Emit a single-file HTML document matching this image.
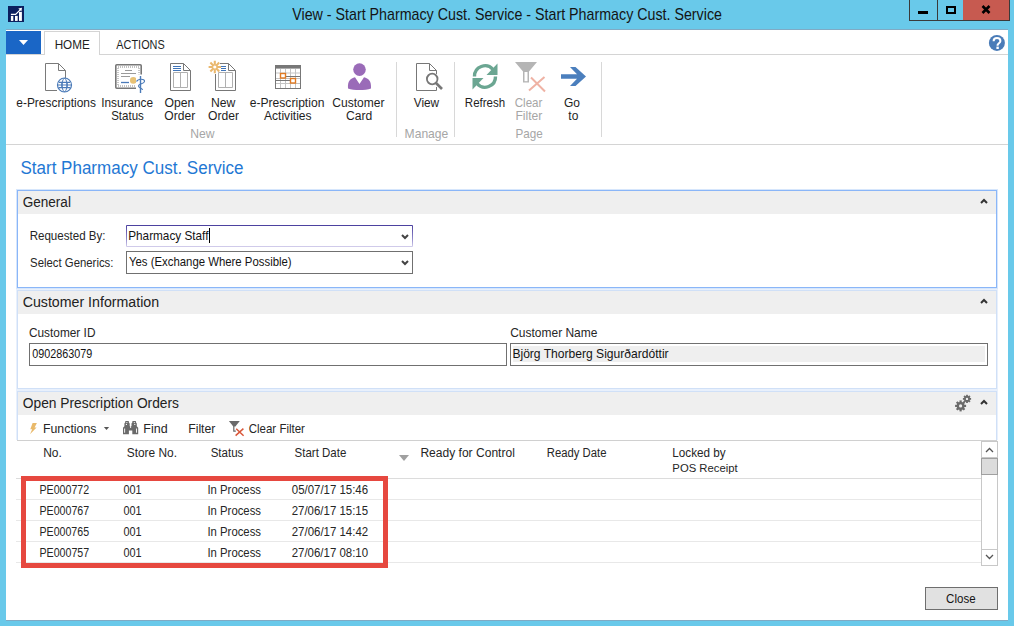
<!DOCTYPE html>
<html><head><meta charset="utf-8">
<style>
html,body{margin:0;padding:0;}
body{width:1014px;height:626px;overflow:hidden;position:relative;background:#69c9ea;font-family:"Liberation Sans",sans-serif;color:#262626;}
.a{position:absolute;}
.t{position:absolute;white-space:nowrap;line-height:1;font-size:11.8px;}
.rl{position:absolute;white-space:nowrap;line-height:13px;font-size:11.8px;text-align:center;color:#222;}
.gl{position:absolute;white-space:nowrap;line-height:1;font-size:11.8px;color:#a8a8a8;}
svg{position:absolute;overflow:visible;}
</style></head>
<body>
<!-- title bar -->
<div class="a" style="left:8px;top:6px;width:16px;height:16px;background:#0b1f5e;"></div>
<svg style="left:8px;top:6px" width="16" height="16" viewBox="0 0 16 16">
  <rect x="2.9" y="9.9" width="2.4" height="5" fill="#fff"/>
  <rect x="7" y="9.9" width="2.7" height="5" fill="#fff"/>
  <rect x="11" y="5.9" width="2.9" height="9" fill="#fff"/>
  <path d="M2.9 8.4 H7.6 L12.2 3.8" stroke="#fff" stroke-width="1.2" fill="none"/>
  <path d="M10.3 2.5 L14 1.8 L13.4 5.5 Z" fill="#fff"/>
</svg>
<!-- window buttons -->
<div class="a" style="left:909px;top:-1px;width:27px;height:20px;border:1px solid #3a3a3a;background:#69c9ea;"></div>
<div class="a" style="left:938px;top:-1px;width:25px;height:20px;border:1px solid #3a3a3a;border-left:none;background:#69c9ea;"></div>
<div class="a" style="left:963px;top:-1px;width:46px;height:20px;border:1px solid #3a3a3a;border-left:none;background:#c75a50;"></div>
<div class="a" style="left:918px;top:11px;width:10px;height:3px;background:#000;"></div>
<div class="a" style="left:946px;top:6px;width:6px;height:4px;border:2px solid #000;"></div>
<svg style="left:981px;top:5px" width="10" height="9" viewBox="0 0 10 9"><path d="M1.5 1 L8.5 8 M8.5 1 L1.5 8" stroke="#000" stroke-width="2.6"/></svg>

<!-- white content -->
<div class="a" style="left:6px;top:30px;width:1002px;height:590px;background:#fff;"></div>
<div class="a" style="left:6px;top:29px;width:1002px;height:1px;background:#80aac4;"></div>
<div class="a" style="left:6px;top:620px;width:1002px;height:1px;background:#80aac4;"></div>

<!-- ribbon tabs -->
<div class="a" style="left:6px;top:31px;width:35px;height:23px;background:#1a66c6;"></div>
<svg style="left:19px;top:40px" width="9" height="5" viewBox="0 0 9 5"><path d="M0 0 H9 L4.5 5 Z" fill="#fff"/></svg>
<div class="a" style="left:44px;top:31px;width:54px;height:23px;border:1px solid #d4d4d4;border-bottom:none;background:#fff;"></div>
<div class="a" style="left:6px;top:54px;width:38px;height:1px;background:#d4d4d4;"></div>
<div class="a" style="left:99px;top:54px;width:909px;height:1px;background:#d4d4d4;"></div>
<!-- help -->
<svg style="left:0;top:0" width="1014" height="60" viewBox="0 0 1014 60">
 <circle cx="996.9" cy="42.9" r="8" fill="#4a7cb8"/>
 <path d="M993.6 41.2 C993.6 38.9 995.2 38 997 38 C999.1 38 1000.4 39.3 1000.4 40.9 C1000.4 42.9 997.9 43.3 997.6 45 V45.8" fill="none" stroke="#fff" stroke-width="2"/>
 <rect x="996.4" y="46.6" width="2.4" height="2.4" fill="#fff"/>
</svg>

<!-- ribbon icons overlay -->
<svg style="left:0;top:0" width="1014" height="626" viewBox="0 0 1014 626">
 <g fill="none" stroke="#7a7a7a" stroke-width="1">
  <!-- e-Prescriptions doc -->
  <path d="M57 90.5 H45.5 V63.5 H58.5 L65.5 70.5 V78"/>
  <path d="M58.5 63.5 V70.5 H65.5"/>
 </g>
 <g fill="#fff" stroke="#4a7ab8" stroke-width="1.2">
  <circle cx="64.5" cy="85" r="7"/>
  <path d="M57.5 85 H71.5 M62 82.5 H67 V87.5 H62 Z M59 82.3 H70 M59 87.7 H70" fill="none"/>
  <path d="M64.5 78 C61 81 61 89 64.5 92 C68 89 68 81 64.5 78" fill="none" stroke-width="1"/>
 </g>
 <!-- Insurance Status -->
 <rect x="115.8" y="64.8" width="25.4" height="23.4" rx="1" fill="#fff" stroke="#777" stroke-width="1.6"/>
 <rect x="118" y="67" width="21" height="19" fill="none" stroke="#b0b0b0" stroke-width="1.4" stroke-dasharray="1 1"/>
 <path d="M125 70.5 H132 M121 73.5 H136 M121 76.5 H130" stroke="#9a9a9a" stroke-width="1"/>
 <path d="M121 82.5 H129" stroke="#4a7ab8" stroke-width="1.3"/>
 <circle cx="133.3" cy="80.4" r="3.3" fill="#e8c275"/>
 <rect x="136" y="74.5" width="9" height="19" fill="#fff"/>
 <path d="M140.5 76 V93" stroke="#4a7ab8" stroke-width="1.4"/>
 <path d="M136.5 81.5 C138 78.5 145 78.5 144.5 81.5 C144 84 138.5 83.5 138.5 86 C138.5 88 142.5 88 142.5 90" fill="none" stroke="#4a7ab8" stroke-width="1.2"/>
 <!-- Open Order -->
 <g fill="#fff" stroke="#777" stroke-width="1">
  <path d="M170.5 63.5 H183.5 L190.5 70.5 V90.5 H170.5 Z"/>
  <path d="M183.5 63.5 V70.5 H190.5" fill="none"/>
 </g>
 <path d="M173 66.5 H181 M173 68.5 H181 M173 70.5 H181" stroke="#3f74b8" stroke-width="1"/>
 <path d="M173.5 72.5 H187.5 V87.5 H173.5 Z M180.5 72.5 V87.5" fill="none" stroke="#b0b0b0" stroke-width="1"/>
 <!-- New Order -->
 <g fill="#fff" stroke="#777" stroke-width="1">
  <path d="M215.5 74 V90.5 H235.5 V70.5 L228.5 63.5 H220" fill="#fff"/>
  <path d="M228.5 63.5 V70.5 H235.5" fill="none"/>
 </g>
 <path d="M221 66.5 H226 M221 68.5 H226 M221 70.5 H226" stroke="#3f74b8" stroke-width="1"/>
 <path d="M218.5 72.5 H232.5 V87.5 H218.5 Z M225.5 72.5 V87.5" fill="none" stroke="#b0b0b0" stroke-width="1"/>
 <g stroke="#eab86e" stroke-width="2.1">
  <path d="M214.8 60.8 V64.8 M214.8 69.2 V73.2 M208.6 67 H212.6 M217 67 H221 M210.4 62.6 L213.2 65.4 M216.4 68.6 L219.2 71.4 M219.2 62.6 L216.4 65.4 M213.2 68.6 L210.4 71.4"/>
 </g>
 <circle cx="214.8" cy="67" r="2.2" fill="none" stroke="#eab86e" stroke-width="1.2"/>
 <!-- Calendar -->
 <rect x="275.5" y="65.5" width="25" height="23" fill="#fff" stroke="#777" stroke-width="1"/>
 <rect x="275" y="65" width="26" height="3.6" fill="#777"/>
 <path d="M280.5 69 V88 M285.5 69 V88 M290.5 69 V88 M295.5 69 V88 M276 73 H300 M276 78.5 H300 M276 83.5 H300" stroke="#c4c4c4" stroke-width="1"/>
 <path d="M286 76.5 H300 M276 80.5 H290" stroke="#777" stroke-width="1"/>
 <rect x="280.5" y="73.5" width="5" height="4.5" fill="#fff" stroke="#e07a22" stroke-width="1.4"/>
 <rect x="290.5" y="78.5" width="5" height="4.5" fill="#fff" stroke="#e07a22" stroke-width="1.4"/>
 <!-- Customer Card -->
 <circle cx="359.5" cy="69.6" r="6.3" fill="#9a6bb8"/>
 <path d="M348 88.5 C347.5 80.5 350.5 78.5 355 77.2 L359.5 84 L364 77.2 C368.5 78.5 371.5 80.5 371 88.5 C365 90.5 354 90.5 348 88.5 Z" fill="#9a6bb8"/>
 <!-- View -->
 <g fill="none" stroke="#777" stroke-width="1">
  <path d="M436.5 74 V70.5 L429.5 63.5 H416.5 V90.5 H436.5 V87"/>
  <path d="M429.5 63.5 V70.5 H436.5"/>
 </g>
 <circle cx="432.2" cy="79" r="5.3" fill="#fff" stroke="#777" stroke-width="1.8"/>
 <path d="M436 83 L442 89" stroke="#777" stroke-width="2.6"/>
 <!-- Refresh -->
 <g fill="none" stroke="#6ba692" stroke-width="3.4">
  <path d="M474.5 76.5 A10.5 10.5 0 0 1 493 69.5"/>
  <path d="M495.5 76.5 A10.5 10.5 0 0 1 477 83.5"/>
 </g>
 <path d="M497.5 63.5 V75 H486.5 Z" fill="#6ba692"/>
 <path d="M472.5 89.5 V78 H483.5 Z" fill="#6ba692"/>
 <!-- Clear Filter -->
 <path d="M515 62 H537 L529 71.5 V82.5 H523 V71.5 Z" fill="#b5b5b5"/>
 <path d="M524.5 72 V81.2 H527.5 V72" fill="#fff"/>
 <path d="M529 90.5 L544.5 77 M531 77.5 L545 91.5" stroke="#efb2a4" stroke-width="2"/>
 <!-- Go to -->
 <path d="M561 74.3 H577 L570 67 H575.5 L586 76.5 L575.5 86 H570 L577 78.7 H561 Z" fill="#4b7fbd"/>
</svg>

<!-- ribbon bottom border -->
<div class="a" style="left:6px;top:144px;width:1002px;height:1px;background:#d4d4d4;"></div>
<!-- separators -->
<div class="a" style="left:396px;top:62px;width:1px;height:75px;background:#d8d8d8;"></div>
<div class="a" style="left:454px;top:62px;width:1px;height:75px;background:#d8d8d8;"></div>
<div class="a" style="left:601px;top:62px;width:1px;height:75px;background:#d8d8d8;"></div>

<!-- ribbon labels -->

<!-- PAGE TITLE -->

<!-- General -->
<div class="a" style="left:17px;top:190px;width:978px;height:96px;border:1px solid #8ab6f8;box-shadow:0 0 0 1px #d6e6fc;"></div>
<div class="a" style="left:18px;top:191px;width:978px;height:23px;background:#efefef;"></div>
<div class="a" style="left:126px;top:225px;width:287px;height:22px;border-radius:1px;background:linear-gradient(#4a3f9e,#8c84c8 60%,#d4cfec);"></div>
<div class="a" style="left:127px;top:226px;width:285px;height:20px;background:#fff;"></div>
<div class="a" style="left:126px;top:251px;width:285px;height:21px;border:1px solid #707070;"></div>
<div class="a" style="left:209px;top:228px;width:1px;height:15px;background:#000;"></div>
<svg style="left:401px;top:234px" width="8" height="6" viewBox="0 0 8 6"><path d="M1 1 L4 4 L7 1" stroke="#444" stroke-width="2" fill="none"/></svg>
<svg style="left:401px;top:260px" width="8" height="6" viewBox="0 0 8 6"><path d="M1 1 L4 4 L7 1" stroke="#444" stroke-width="2" fill="none"/></svg>
<svg style="left:980px;top:198px" width="8" height="6" viewBox="0 0 8 6"><path d="M1 5 L4 2 L7 5" stroke="#333" stroke-width="2" fill="none"/></svg>

<!-- Customer Information -->
<div class="a" style="left:17px;top:290px;width:978px;height:97px;border:1px solid #d0e0f7;box-shadow:0 0 0 1px #e8f0fc;"></div>
<div class="a" style="left:18px;top:291px;width:978px;height:23px;background:#efefef;"></div>
<div class="a" style="left:29px;top:343px;width:476px;height:21px;border:1px solid #707070;"></div>
<div class="a" style="left:510px;top:343px;width:476px;height:21px;border:1px solid #707070;"></div>
<div class="a" style="left:513px;top:346px;width:472px;height:16px;background:#efefef;"></div>
<svg style="left:980px;top:298px" width="8" height="6" viewBox="0 0 8 6"><path d="M1 5 L4 2 L7 5" stroke="#333" stroke-width="2" fill="none"/></svg>

<!-- Open Prescription Orders -->
<div class="a" style="left:16px;top:390px;width:982px;height:50px;background:#e8f0fc;"></div>
<div class="a" style="left:17px;top:391px;width:978px;height:49px;border:1px solid #d0e0f7;border-bottom:none;background:#fff;"></div>
<div class="a" style="left:18px;top:392px;width:978px;height:23px;background:#efefef;"></div>
<svg style="left:980px;top:399px" width="8" height="6" viewBox="0 0 8 6"><path d="M1 5 L4 2 L7 5" stroke="#333" stroke-width="2" fill="none"/></svg>
<div class="a" style="left:17px;top:440px;width:980px;height:1px;background:#d0d0d0;"></div>


<!-- toolbar icons -->
<svg style="left:0;top:380px" width="1014" height="70" viewBox="0 380 1014 70">
 <path d="M32.6 423 H36.9 L34.6 427.6 H36.6 L30 434.2 L32.2 429.2 H30.3 Z" fill="#e9b96a"/>
 <path d="M103.9 426.9 H109.1 L106.5 430.1 Z" fill="#555"/>
 <g fill="#6a6a6a">
  <path d="M123 434.2 V427.8 L124.4 426.3 V423.6 L125.3 422.3 V420.9 H128.8 V422.3 L129.7 423.6 V426.3 L130.3 426.3 V427.5 H131 V426.3 L131.5 426.3 V423.6 L132.4 422.3 V420.9 H135.9 V422.3 L136.8 423.6 V426.3 L138.2 427.8 V434.2 H132.3 V430.5 H128.9 V434.2 Z"/>
 </g>
 <g fill="#fff">
  <rect x="124.2" y="428.5" width="0.9" height="4.2"/>
  <rect x="136.1" y="428.5" width="0.9" height="4.2"/>
  <circle cx="126.9" cy="422.5" r="0.6"/><circle cx="134.3" cy="422.5" r="0.6"/>
  <circle cx="126.4" cy="424.4" r="0.6"/><circle cx="134.8" cy="424.4" r="0.6"/>
  <circle cx="130.6" cy="427.2" r="0.6"/>
 </g>
 <path d="M228.9 421 H239.8 L235.3 426.3 V431 H236.3" fill="none" stroke="none"/>
 <path d="M228.9 421 H239.8 L235.4 426.5 H233.3 Z" fill="#6a6a6a"/>
 <path d="M233.8 426 V431.2 H235.8" fill="none" stroke="#6a6a6a" stroke-width="1.2"/>
 <path d="M235.6 435.6 L243.4 428.6 M236.2 428.8 L243.6 435.8" stroke="#d9573a" stroke-width="1.5"/>
 <!-- gears -->
 <g fill="#6a6a6a">
  <circle cx="960.6" cy="405.9" r="3.9"/>
  <g transform="translate(960.6 405.9)">
   <rect x="-1.1" y="-5.5" width="2.2" height="11"/>
   <rect x="-1.1" y="-5.5" width="2.2" height="11" transform="rotate(45)"/>
   <rect x="-1.1" y="-5.5" width="2.2" height="11" transform="rotate(90)"/>
   <rect x="-1.1" y="-5.5" width="2.2" height="11" transform="rotate(135)"/>
  </g>
  <circle cx="967" cy="398.9" r="2.8"/>
  <g transform="translate(967 398.9)">
   <rect x="-0.9" y="-4.1" width="1.8" height="8.2"/>
   <rect x="-0.9" y="-4.1" width="1.8" height="8.2" transform="rotate(45)"/>
   <rect x="-0.9" y="-4.1" width="1.8" height="8.2" transform="rotate(90)"/>
   <rect x="-0.9" y="-4.1" width="1.8" height="8.2" transform="rotate(135)"/>
  </g>
 </g>
 <circle cx="960.6" cy="405.9" r="1.6" fill="#efefef"/>
 <circle cx="967" cy="398.9" r="1.2" fill="#efefef"/>
</svg>

<!-- grid header -->
<svg style="left:399px;top:455px" width="10" height="6" viewBox="0 0 10 6"><path d="M0 0 H10 L5 6 Z" fill="#a0a0a0"/></svg>
<div class="a" style="left:16px;top:478px;width:965px;height:1px;background:#dcdcdc;"></div>
<div class="a" style="left:16px;top:499px;width:965px;height:1px;background:#e8e8e8;"></div>
<div class="a" style="left:16px;top:520px;width:965px;height:1px;background:#e8e8e8;"></div>
<div class="a" style="left:16px;top:541px;width:965px;height:1px;background:#e8e8e8;"></div>
<div class="a" style="left:16px;top:562px;width:965px;height:1px;background:#e8e8e8;"></div>

<!-- rows -->

<!-- red highlight -->
<div class="a" style="left:21px;top:476px;width:357px;height:82px;border:5px solid #e6483f;"></div>

<!-- scrollbar -->
<div class="a" style="left:981px;top:441px;width:15px;height:123px;border:1px solid #c8c8c8;background:#fff;"></div>
<div class="a" style="left:981px;top:457px;width:17px;height:1px;background:#c8c8c8;"></div>
<div class="a" style="left:981px;top:458px;width:15px;height:15px;border:1px solid #a0a0a0;background:#dcdcdc;"></div>
<div class="a" style="left:981px;top:549px;width:17px;height:1px;background:#c8c8c8;"></div>
<svg style="left:985px;top:447px" width="9" height="6" viewBox="0 0 9 6"><path d="M1 5 L4.5 1.5 L8 5" stroke="#555" stroke-width="1.3" fill="none"/></svg>
<svg style="left:985px;top:554px" width="9" height="6" viewBox="0 0 9 6"><path d="M1 1 L4.5 4.5 L8 1" stroke="#555" stroke-width="1.3" fill="none"/></svg>

<!-- close button -->
<div class="a" style="left:925px;top:587px;width:71px;height:21px;border:1px solid #6e6e6e;background:#e1e1e1;"></div>

<div class="t" style="left:292.23px;top:8.00px;font-size:14.25px;color:#141414;transform-origin:0 12px;transform:scaleY(1.122);">View - Start Pharmacy Cust. Service - Start Pharmacy Cust. Service</div>
<div class="t" style="left:54.64px;top:39.00px;font-size:11.69px;color:#1e1e1e;transform-origin:0 10px;transform:scaleY(1.032);">HOME</div>
<div class="t" style="left:116.37px;top:40.00px;font-size:10.89px;color:#1e1e1e;transform-origin:0 9px;transform:scaleY(1.108);">ACTIONS</div>
<div class="t" style="left:16.29px;top:98.00px;font-size:11.95px;color:#1e1e1e;transform-origin:0 9px;transform:scaleY(1.046);">e-Prescriptions</div>
<div class="t" style="left:101.21px;top:98.00px;font-size:11.82px;color:#1e1e1e;transform-origin:0 9px;transform:scaleY(1.057);">Insurance</div>
<div class="t" style="left:111.18px;top:111.00px;font-size:11.54px;color:#1e1e1e;transform-origin:0 9px;transform:scaleY(1.083);">Status</div>
<div class="t" style="left:164.42px;top:97.00px;font-size:12.21px;color:#1e1e1e;transform-origin:0 10px;transform:scaleY(1.024);">Open</div>
<div class="t" style="left:164.33px;top:110.00px;font-size:12.08px;color:#1e1e1e;transform-origin:0 10px;transform:scaleY(1.035);">Order</div>
<div class="t" style="left:210.99px;top:97.00px;font-size:12.19px;color:#1e1e1e;transform-origin:0 10px;transform:scaleY(1.026);">New</div>
<div class="t" style="left:208.02px;top:110.00px;font-size:12.12px;color:#1e1e1e;transform-origin:0 10px;transform:scaleY(1.032);">Order</div>
<div class="t" style="left:249.69px;top:97.00px;font-size:12.11px;color:#1e1e1e;transform-origin:0 10px;transform:scaleY(1.032);">e-Prescription</div>
<div class="t" style="left:263.97px;top:110.00px;font-size:12.08px;color:#1e1e1e;transform-origin:0 10px;transform:scaleY(1.035);">Activities</div>
<div class="t" style="left:332.30px;top:97.00px;font-size:12.04px;color:#1e1e1e;transform-origin:0 10px;transform:scaleY(1.038);">Customer</div>
<div class="t" style="left:345.99px;top:110.00px;font-size:12.12px;color:#1e1e1e;transform-origin:0 10px;transform:scaleY(1.032);">Card</div>
<div class="t" style="left:413.74px;top:98.00px;font-size:11.83px;color:#1e1e1e;transform-origin:0 9px;transform:scaleY(1.057);">View</div>
<div class="t" style="left:464.85px;top:98.00px;font-size:11.51px;color:#1e1e1e;transform-origin:0 9px;transform:scaleY(1.086);">Refresh</div>
<div class="t" style="left:514.72px;top:98.00px;font-size:11.57px;color:#a6a6a6;transform-origin:0 9px;transform:scaleY(1.080);">Clear</div>
<div class="t" style="left:515.40px;top:110.00px;font-size:12.14px;color:#a6a6a6;transform-origin:0 10px;transform:scaleY(1.030);">Filter</div>
<div class="t" style="left:564.00px;top:97.00px;font-size:12.00px;color:#1e1e1e;transform-origin:0 10px;transform:scaleY(1.042);">Go</div>
<div class="t" style="left:568.36px;top:110.00px;font-size:12.00px;color:#1e1e1e;transform-origin:0 10px;transform:scaleY(1.042);">to</div>
<div class="t" style="left:190.30px;top:128.00px;font-size:12.14px;color:#a6a6a6;transform-origin:0 10px;transform:scaleY(1.054);">New</div>
<div class="t" style="left:404.60px;top:128.00px;font-size:12.10px;color:#a6a6a6;transform-origin:0 10px;transform:scaleY(1.057);">Manage</div>
<div class="t" style="left:515.44px;top:128.00px;font-size:11.67px;color:#a6a6a6;transform-origin:0 10px;transform:scaleY(1.096);">Page</div>
<div class="t" style="left:20.43px;top:160.00px;font-size:17.03px;color:#1f78d4;transform-origin:0 14px;transform:scaleY(1.076);">Start Pharmacy Cust. Service</div>
<div class="t" style="left:22.72px;top:196.00px;font-size:13.55px;color:#222;transform-origin:0 11px;transform:scaleY(1.084);">General</div>
<div class="t" style="left:22.69px;top:295.00px;font-size:14.19px;color:#222;transform-origin:0 12px;transform:scaleY(1.035);">Customer Information</div>
<div class="t" style="left:22.75px;top:397.00px;font-size:13.79px;color:#222;transform-origin:0 11px;transform:scaleY(1.065);">Open Prescription Orders</div>
<div class="t" style="left:29.65px;top:231.00px;font-size:11.57px;color:#262626;transform-origin:0 9px;transform:scaleY(1.106);">Requested By:</div>
<div class="t" style="left:30.09px;top:258.00px;font-size:11.36px;color:#262626;transform-origin:0 9px;transform:scaleY(1.126);">Select Generics:</div>
<div class="t" style="left:128.23px;top:230.00px;font-size:11.78px;color:#141414;transform-origin:0 10px;transform:scaleY(1.098);">Pharmacy Staff</div>
<div class="t" style="left:128.94px;top:257.00px;font-size:11.38px;color:#141414;transform-origin:0 9px;transform:scaleY(1.124);">Yes (Exchange Where Possible)</div>
<div class="t" style="left:28.91px;top:328.00px;font-size:11.86px;color:#262626;transform-origin:0 9px;transform:scaleY(1.091);">Customer ID</div>
<div class="t" style="left:510.20px;top:327.00px;font-size:11.99px;color:#262626;">Customer Name</div>
<div class="t" style="left:32.17px;top:349.00px;font-size:10.81px;color:#141414;transform-origin:0 9px;transform:scaleY(1.150);">0902863079</div>
<div class="t" style="left:512.40px;top:348.00px;font-size:12.09px;color:#141414;transform-origin:0 10px;transform:scaleY(1.058);">Björg Thorberg Sigurðardóttir</div>
<div class="t" style="left:42.98px;top:423.00px;font-size:12.33px;color:#262626;">Functions</div>
<div class="t" style="left:143.27px;top:423.00px;font-size:12.50px;color:#262626;transform-origin:0 10px;transform:scaleY(0.988);">Find</div>
<div class="t" style="left:188.19px;top:423.00px;font-size:12.24px;color:#262626;">Filter</div>
<div class="t" style="left:248.72px;top:424.00px;font-size:11.50px;color:#262626;transform-origin:0 9px;transform:scaleY(1.074);">Clear Filter</div>
<div class="t" style="left:43.17px;top:447.00px;font-size:12.00px;color:#262626;transform-origin:0 10px;transform:scaleY(1.017);">No.</div>
<div class="t" style="left:126.76px;top:448.00px;font-size:11.91px;color:#262626;transform-origin:0 9px;transform:scaleY(1.025);">Store No.</div>
<div class="t" style="left:210.68px;top:448.00px;font-size:11.54px;color:#262626;transform-origin:0 9px;transform:scaleY(1.058);">Status</div>
<div class="t" style="left:294.58px;top:448.00px;font-size:11.49px;color:#262626;transform-origin:0 9px;transform:scaleY(1.063);">Start Date</div>
<div class="t" style="left:420.41px;top:447.00px;font-size:12.06px;color:#262626;transform-origin:0 10px;transform:scaleY(1.013);">Ready for Control</div>
<div class="t" style="left:546.77px;top:448.00px;font-size:11.31px;color:#262626;transform-origin:0 9px;transform:scaleY(1.080);">Ready Date</div>
<div class="t" style="left:672.33px;top:447.00px;font-size:11.70px;color:#262626;transform-origin:0 10px;transform:scaleY(1.044);">Locked by</div>
<div class="t" style="left:672.37px;top:463.00px;font-size:11.30px;color:#262626;transform-origin:0 9px;transform:scaleY(1.042);">POS Receipt</div>
<div class="t" style="left:39.52px;top:485.00px;font-size:10.64px;color:#262626;transform-origin:0 9px;transform:scaleY(1.150);">PE000772</div>
<div class="t" style="left:123.45px;top:485.00px;font-size:10.90px;color:#262626;transform-origin:0 9px;transform:scaleY(1.147);">001</div>
<div class="t" style="left:207.46px;top:485.00px;font-size:11.33px;color:#262626;transform-origin:0 9px;transform:scaleY(1.103);">In Process</div>
<div class="t" style="left:291.84px;top:485.00px;font-size:11.43px;color:#262626;transform-origin:0 9px;transform:scaleY(1.094);">05/07/17 15:46</div>
<div class="t" style="left:39.52px;top:506.00px;font-size:10.64px;color:#262626;transform-origin:0 9px;transform:scaleY(1.150);">PE000767</div>
<div class="t" style="left:123.45px;top:506.00px;font-size:10.90px;color:#262626;transform-origin:0 9px;transform:scaleY(1.147);">001</div>
<div class="t" style="left:207.46px;top:506.00px;font-size:11.33px;color:#262626;transform-origin:0 9px;transform:scaleY(1.103);">In Process</div>
<div class="t" style="left:291.73px;top:506.00px;font-size:11.44px;color:#262626;transform-origin:0 9px;transform:scaleY(1.093);">27/06/17 15:15</div>
<div class="t" style="left:39.52px;top:527.00px;font-size:10.62px;color:#262626;transform-origin:0 9px;transform:scaleY(1.150);">PE000765</div>
<div class="t" style="left:123.45px;top:527.00px;font-size:10.90px;color:#262626;transform-origin:0 9px;transform:scaleY(1.147);">001</div>
<div class="t" style="left:207.46px;top:527.00px;font-size:11.33px;color:#262626;transform-origin:0 9px;transform:scaleY(1.103);">In Process</div>
<div class="t" style="left:291.73px;top:527.00px;font-size:11.46px;color:#262626;transform-origin:0 9px;transform:scaleY(1.091);">27/06/17 14:42</div>
<div class="t" style="left:39.52px;top:548.00px;font-size:10.64px;color:#262626;transform-origin:0 9px;transform:scaleY(1.150);">PE000757</div>
<div class="t" style="left:123.45px;top:548.00px;font-size:10.90px;color:#262626;transform-origin:0 9px;transform:scaleY(1.147);">001</div>
<div class="t" style="left:207.46px;top:548.00px;font-size:11.33px;color:#262626;transform-origin:0 9px;transform:scaleY(1.103);">In Process</div>
<div class="t" style="left:291.73px;top:548.00px;font-size:11.44px;color:#262626;transform-origin:0 9px;transform:scaleY(1.093);">27/06/17 08:10</div>
<div class="t" style="left:946.12px;top:594.00px;font-size:11.53px;color:#141414;transform-origin:0 9px;transform:scaleY(1.096);">Close</div>
</body></html>
